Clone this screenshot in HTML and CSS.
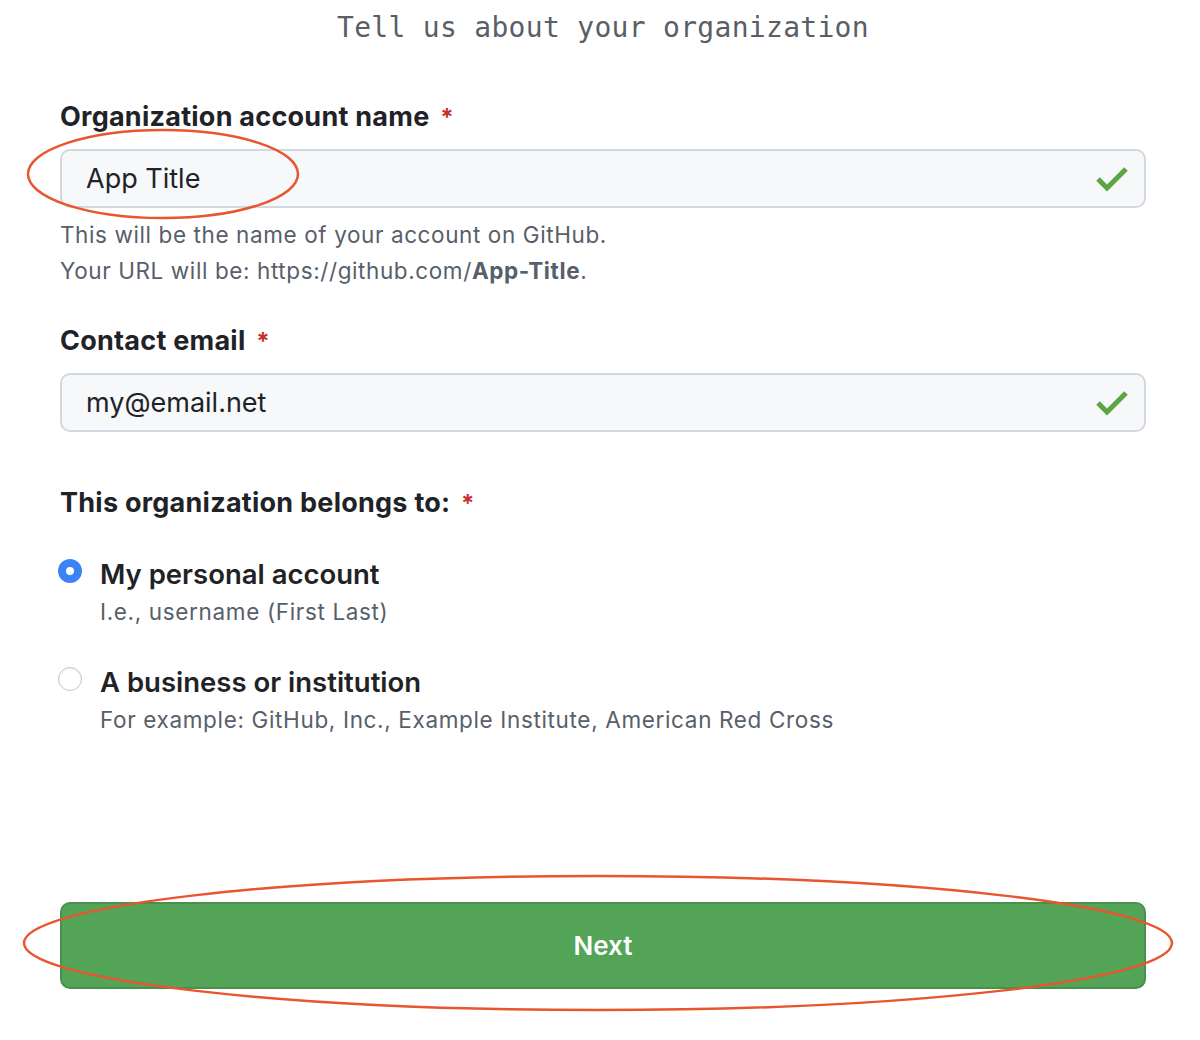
FILE: index.html
```html
<!DOCTYPE html>
<html lang="en">
<head>
<meta charset="utf-8">
<title>Tell us about your organization</title>
<link rel="stylesheet" href="styles.css">
</head>
<body>
<main class="page">
  <h1 class="title">Tell us about your organization</h1>

  <div class="field first">
    <label class="label">Organization account name <span class="req">*</span></label>
    <div class="input">
      <span class="value">App Title</span>
      <svg class="check" width="32" height="26" viewBox="0 0 32 26"><polyline points="2,13 11,22 30,3" fill="none" stroke="#5aa644" stroke-width="5"/></svg>
    </div>
    <p class="help">This will be the name of your account on GitHub.<br>Your URL will be: https://github.com/<strong>App-Title</strong>.</p>
  </div>

  <div class="field second">
    <label class="label">Contact email <span class="req">*</span></label>
    <div class="input">
      <span class="value">my@email.net</span>
      <svg class="check" width="32" height="26" viewBox="0 0 32 26"><polyline points="2,13 11,22 30,3" fill="none" stroke="#5aa644" stroke-width="5"/></svg>
    </div>
  </div>

  <div class="field third">
    <label class="label">This organization belongs to: <span class="req">*</span></label>
    <div class="options">
      <div class="option">
        <span class="radio checked"></span>
        <div class="option-text">
          <div class="option-title">My personal account</div>
          <div class="option-sub">I.e., username (First Last)</div>
        </div>
      </div>
      <div class="option">
        <span class="radio"></span>
        <div class="option-text">
          <div class="option-title">A business or institution</div>
          <div class="option-sub">For example: GitHub, Inc., Example Institute, American Red Cross</div>
        </div>
      </div>
    </div>
  </div>

  <button class="next" type="button">Next</button>
</main>
<svg class="marks" width="1200" height="1040" viewBox="0 0 1200 1040">
  <ellipse cx="163" cy="174" rx="135" ry="44" fill="none" stroke="#e8552f" stroke-width="2.5"/>
  <ellipse cx="598" cy="943" rx="574" ry="67" fill="none" stroke="#e8552f" stroke-width="2.5"/>
</svg>
</body>
</html>
```
FILE: styles.css
```css
html, body {
  margin: 0;
  padding: 0;
  background: #ffffff;
}
body {
  position: relative;
  width: 1200px;
  height: 1040px;
  overflow: hidden;
  font-family: Inter, "Liberation Sans", Arial, sans-serif;
  color: #1f2328;
}
.page {
  width: 1086px;
  padding-left: 60px;
  display: flex;
  flex-direction: column;
}
.title {
  margin: 0;
  height: 52px;
  line-height: 56px;
  text-align: center;
  font-family: "DejaVu Sans Mono", "Liberation Mono", monospace;
  font-weight: 400;
  font-size: 28px;
  letter-spacing: 0.3px;
  color: #595f66;
}
.field.first { margin-top: 49px; }
.field.second { margin-top: 36px; }
.field.third { margin-top: 55px; }
.label {
  display: block;
  font-size: 27px;
  font-weight: 700;
  line-height: 32px;
  letter-spacing: 0.25px;
  color: #1f2328;
}
.req {
  color: #c9302c;
  margin-left: 4px;
  font-size: 24px;
}
.input {
  margin-top: 15px;
  box-sizing: border-box;
  height: 59px;
  border: 2px solid #d3d8de;
  border-radius: 10px;
  background: #f6f8fa;
  display: flex;
  align-items: center;
  justify-content: space-between;
  padding: 0 16px 0 24px;
}
.value {
  font-size: 27px;
  color: #1f2328;
}
.check { display: block; }
.help {
  margin: 9px 0 0;
  font-size: 22.5px;
  line-height: 36px;
  letter-spacing: 0.6px;
  color: #57606a;
}
.help strong {
  font-weight: 700;
  color: #57606a;
}
.options {
  margin-top: 36px;
  display: flex;
  flex-direction: column;
  gap: 34px;
}
.option {
  display: flex;
  align-items: flex-start;
  gap: 18px;
  margin-left: -2px;
}
.radio {
  flex: none;
  box-sizing: border-box;
  width: 24px;
  height: 24px;
  margin-top: 3px;
  border-radius: 50%;
  border: 1px solid #c6c6c6;
  background: #fff;
  box-shadow: inset 0 1px 2px rgba(0,0,0,0.08);
}
.radio.checked {
  border: 8px solid #3b82f6;
  background: #fff;
  box-shadow: none;
}
.option-title {
  font-size: 27.5px;
  font-weight: 600;
  line-height: 36px;
  color: #1f2328;
}
.option-sub {
  margin-top: 2px;
  font-size: 22.5px;
  line-height: 36px;
  letter-spacing: 0.65px;
  color: #57606a;
}
.next {
  margin-top: 164px;
  box-sizing: border-box;
  width: 1086px;
  height: 87px;
  border: 2px solid #4a904c;
  border-radius: 10px;
  background: #53a456;
  color: #ffffff;
  font-family: Inter, "Liberation Sans", Arial, sans-serif;
  font-size: 26px;
  font-weight: 600;
  cursor: pointer;
}
.marks {
  position: absolute;
  left: 0;
  top: 0;
  pointer-events: none;
}
```
